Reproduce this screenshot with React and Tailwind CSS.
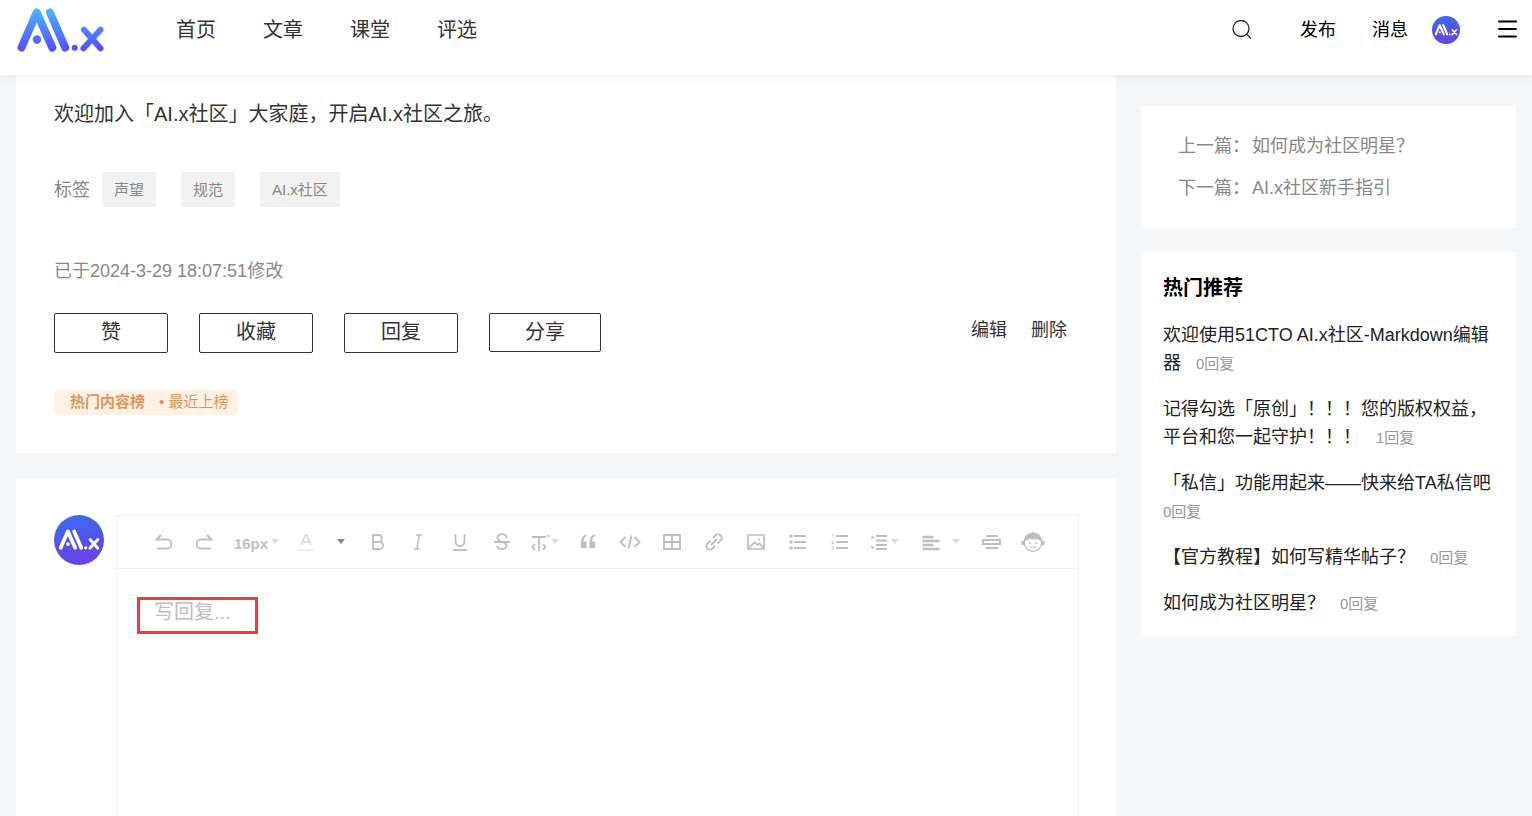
import { useState } from 'react';

const navItems = ['首页', '文章', '课堂', '评选'];
const tags = ['声望', '规范', 'AI.x社区'];

const actions = [
  { label: '赞', size: 'h-10 w-[114px]' },
  { label: '收藏', size: 'h-10 w-[114px]' },
  { label: '回复', size: 'h-10 w-[114px]' },
  { label: '分享', size: 'h-[39px] w-28' }
];

const hotPosts = [
  { title: '欢迎使用51CTO AI.x社区-Markdown编辑器', replies: 0 },
  { title: '记得勾选「原创」！！！您的版权权益，平台和您一起守护！！！', replies: 1 },
  { title: '「私信」功能用起来——快来给TA私信吧', replies: 0 },
  { title: '【官方教程】如何写精华帖子？', replies: 0 },
  { title: '如何成为社区明星？', replies: 0 }
];

const LogoShape = () => (
  <>
    <path d="M21.5 47.5 36.7 12.5 52.3 47.5" strokeWidth="8" />
    <path d="M50 12.5 65.2 47.5" strokeWidth="8" />
    <path d="M84 29.8 100.5 48.3M100.5 29.8 83.5 48.3" strokeWidth="6" />
  </>
);

const Logo = () => (
  <svg width="88" height="45" viewBox="17 8 88 45" fill="none">
    <defs>
      <linearGradient id="logoFill" gradientUnits="userSpaceOnUse" x1="0" y1="8" x2="0" y2="52">
        <stop offset="0" stopColor="#4db8ff" />
        <stop offset="1" stopColor="#544bff" />
      </linearGradient>
    </defs>
    <g stroke="url(#logoFill)" fill="none" strokeLinecap="round" strokeLinejoin="round">
      <LogoShape />
    </g>
    <circle cx="37" cy="39.5" r="4.2" fill="url(#logoFill)" />
    <circle cx="74.7" cy="47.8" r="3" fill="url(#logoFill)" />
  </svg>
);

const Avatar = ({ size, id }) => (
  <svg width={size} height={size} viewBox="0 0 50 50" className="shrink-0">
    <defs>
      <linearGradient id={id} x1="0" y1="0" x2="0.25" y2="1">
        <stop offset="0" stopColor="#3470f0" />
        <stop offset="1" stopColor="#6a42e6" />
      </linearGradient>
    </defs>
    <circle cx="25" cy="25" r="25" fill={`url(#${id})`} />
    <g transform="translate(-3.4 10.5) scale(0.47)">
      <g stroke="#fff" fill="none" strokeLinecap="round" strokeLinejoin="round">
        <LogoShape />
      </g>
      <circle cx="37" cy="39.5" r="4" fill="#fff" />
      <circle cx="74.7" cy="47.5" r="3.5" fill="#fff" />
    </g>
  </svg>
);

const Caret = ({ dark }) => (
  <svg width="10" height="20" viewBox="0 0 10 20">
    <path d="M1 7h8L5 12z" fill={dark ? '#888' : '#dcdcdc'} />
  </svg>
);

const Icon = ({ children, width = 1.8 }) => (
  <svg width="20" height="20" viewBox="0 0 20 20" fill="none" stroke="#bfbfbf" strokeWidth={width}>
    {children}
  </svg>
);

const tools = [
  { label: '撤销', box: 'w-10', icon: <Icon><path d="M7 3 2.5 7.5H13a4.5 4.5 0 0 1 0 9H3" /></Icon> },
  { label: '重做', box: 'w-10', icon: <Icon><path d="M13 3l4.500 4.500H7a4.500 4.500 0 0 0 0 9h10" /></Icon> },
  { label: '字号', box: 'w-[66px] gap-0.5', icon: <span className="pt-1 text-[15px] font-bold text-[#bfbfbf]">16px</span>, caret: 'light' },
  {
    label: '文字颜色',
    box: 'w-8',
    icon: (
      <Icon width={1.6}>
        <path d="M5 13 9.500 3h1L15 13M6.500 10h7" stroke="#d6d6d6" />
        <path d="M2 18h16" stroke="#ececec" strokeWidth="2" />
      </Icon>
    )
  },
  { label: '选择颜色', box: 'w-[37px]', caret: 'dark' },
  { label: '加粗', box: 'w-[38px]', icon: <Icon><path d="M5 3v14h6.500a3.600 3.600 0 0 0 0-7.200H5h5.500a3.400 3.400 0 0 0 0-6.800z" /></Icon> },
  { label: '斜体', box: 'w-[42px]', icon: <Icon width={1.6}><path d="M8 3h6M6 17h6M11.300 3 8.800 17" /></Icon> },
  { label: '下划线', box: 'w-[42px]', icon: <Icon><path d="M5.500 2v7.500a4.500 4.500 0 0 0 9 0V2M3 18h14" /></Icon> },
  { label: '删除线', box: 'w-[42px]', icon: <Icon><path d="M14.500 6c0-5-9-5-9-.5 0 2.500 2 3.700 4.500 4.500s4.500 2 4.500 4c0 4-9 4-9.500-.2M2 10h16" /></Icon> },
  {
    label: '标题',
    box: 'w-11',
    caret: 'light',
    icon: (
      <Icon width={1.8}>
        <path d="M2 5h14M9 5v14M5 12l-2.500 3L5 18M13 12l2.500 3-2.500 3" />
        <path d="M17.500 4h2" />
      </Icon>
    )
  },
  {
    label: '引用',
    box: 'w-[42px]',
    icon: (
      <Icon width={0}>
        <path d="M8.500 2.500v1.500c-2 1-2.800 3-2.800 5.500h2.800V16H3v-5.500C3 6 5 3 8.500 2.500zM17 2.500v1.500c-2 1-2.800 3-2.800 5.500H17V16h-5.500v-5.500C11.500 6 13.500 3 17 2.500z" fill="#bfbfbf" />
      </Icon>
    )
  },
  {
    label: '代码',
    box: 'w-[42px]',
    icon: (
      <svg width="22" height="20" viewBox="0 0 22 20" fill="none" stroke="#bfbfbf" strokeWidth="1.8">
        <path d="M6.500 5 1.500 10l5 5M15.500 5l5 5-5 5M12.500 3.500l-3 13" />
      </svg>
    )
  },
  { label: '表格', box: 'w-[42px]', icon: <Icon><path d="M2 3h16v14H2zM2 10h16M10 3v14" /></Icon> },
  {
    label: '链接',
    box: 'w-[42px]',
    icon: (
      <Icon>
        <path d="M9 6l2.600-2.600a3.500 3.500 0 0 1 5 5L13.500 11.500M6.500 8.500 3.400 11.600a3.500 3.500 0 0 0 5 5L11 14M7 13l6-6" />
      </Icon>
    )
  },
  {
    label: '图片',
    box: 'w-[42px]',
    icon: (
      <Icon width={1.7}>
        <path d="M2 3h16v14H2zM3 16l5.500-5.500 3 2.500 2-1.500L17 16" />
        <circle cx="13" cy="7.500" r="1" fill="#bfbfbf" stroke="none" />
      </Icon>
    )
  },
  {
    label: '无序列表',
    box: 'w-[42px]',
    icon: <Icon width={2}><path d="M6 4h12M6 10h12M6 16h12" /><path d="M1.500 4h3M1.500 10h3M1.500 16h3" strokeWidth="3" /></Icon>
  },
  {
    label: '有序列表',
    box: 'w-[42px]',
    icon: (
      <Icon>
        <path d="M6 4h12M6 10h12M6 16h12" />
        <path d="M2 3l1-.5V5.500M1.500 8.700h2v1.300l-2 1.500h2.200M1.500 14.200h2L2.500 15.800h1v1.700h-2" strokeWidth="0.700" />
      </Icon>
    )
  },
  {
    label: '行高',
    box: 'w-12',
    caret: 'light',
    icon: (
      <Icon>
        <path d="M6 4h11M6 8.500h11M6 13h11M6 17h11" />
        <path d="M.5 6.500h4L2.500 3.500zM.5 14.500h4l-2 3z" fill="#bfbfbf" stroke="none" />
      </Icon>
    )
  },
  {
    label: '对齐',
    box: 'w-16 gap-2.5',
    caret: 'light',
    icon: <Icon width={2.600}><path d="M1.500 5h11M1.500 9h17M1.500 13h11M1.500 17h17" /></Icon>
  },
  { label: '分割线', box: 'w-9', icon: <Icon><path d="M5 4h12M5 16h12" /><path d="M2 8h17v4H2z" /></Icon> },
  {
    label: '表情',
    box: 'w-12',
    icon: (
      <svg width="24" height="22" viewBox="0 0 24 22" fill="#bfbfbf">
        <circle cx="2.500" cy="12" r="2.300" />
        <circle cx="21.500" cy="12" r="2.300" />
        <circle cx="12" cy="11.500" r="8.800" fill="#fff" stroke="#bfbfbf" strokeWidth="1.300" />
        <path d="M3 10C3.500 4.500 7.500 2 11 1.800L12 0l1.200 1.800C17 2 20.500 5 21 10c-2.300-.2-4.500-1.300-5.500-2.200-2 .8-5 .8-7 0C7 9 5.300 9.800 3 10z" />
        <circle cx="8.500" cy="12" r="1" />
        <circle cx="15.500" cy="12" r="1" />
        <path d="M9 15.500q3 2.500 6 0" fill="none" stroke="#bfbfbf" />
      </svg>
    )
  }
];

const Header = () => (
  <header className="relative z-10 flex h-[75px] items-center bg-white pb-[15px] pl-[17px] pr-[15px] shadow-[0_2px_10px_rgba(0,0,0,0.06)]">
    <a href="#home" aria-label="AI.x">
      <Logo />
    </a>
    <nav className="ml-[71px] flex gap-[47px] text-xl text-[#333]">
      {navItems.map((item) => (
        <a key={item} href={`#${item}`}>{item}</a>
      ))}
    </nav>
    <div className="ml-auto flex items-center text-lg text-black">
      <button type="button" aria-label="搜索">
        <svg width="20" height="20" viewBox="0 0 20 20" fill="none" stroke="#222" strokeWidth="1.3">
          <circle cx="9" cy="8.500" r="8" />
          <path d="M14.600 14.100 19 18.500" />
        </svg>
      </button>
      <a href="#publish" className="ml-12">发布</a>
      <a href="#message" className="ml-9">消息</a>
      <a href="#me" aria-label="个人中心" className="ml-6">
        <Avatar size={28} id="avatarSmall" />
      </a>
      <button type="button" aria-label="菜单" className="ml-[37px]">
        <svg width="20" height="20" viewBox="0 0 20 20" stroke="#000" strokeWidth="2" strokeLinecap="round">
          <path d="M2 1.500h17M2 9h17M2 16.500h17" />
        </svg>
      </button>
    </div>
  </header>
);

const Article = () => (
  <article className="bg-white px-[38px] pb-[38px] pt-6">
    <p className="text-xl leading-[30px] text-[#333]">
      欢迎加入「AI.x社区」大家庭，开启AI.x社区之旅。
    </p>

    {/* Tags */}
    <div className="mt-[43px] flex items-center text-[#888]">
      <span className="mr-3 text-lg">标签</span>
      <div className="flex gap-[25px]">
        {tags.map((tag) => (
          <a key={tag} href={`#${tag}`} className="rounded-xs bg-[#f2f2f2] px-3 text-[15px] leading-[35px]">
            {tag}
          </a>
        ))}
      </div>
    </div>

    <p className="mt-[52px] text-lg leading-6 text-[#888]">已于2024-3-29 18:07:51修改</p>

    {/* Actions */}
    <div className="mt-[30px] flex items-center text-[#333]">
      <div className="flex gap-[31px] text-xl">
        {actions.map((action) => (
          <button key={action.label} type="button" className={`rounded-xs border border-[#333] pb-0.5 ${action.size}`}>
            {action.label}
          </button>
        ))}
      </div>
      <div className="ml-auto mr-[11px] flex gap-6 pb-1.5 text-lg">
        <button type="button">编辑</button>
        <button type="button">删除</button>
      </div>
    </div>

    <div className="mt-[37px] flex">
      <a href="#rank" className="rounded bg-[#fff2e5] pb-px pl-4 pr-2.5 text-[15px] leading-6 text-[#de965b]">
        <b className="mr-3.5">热门内容榜</b>• 最近上榜
      </a>
    </div>
  </article>
);

const ReplyEditor = () => {
  const [reply, setReply] = useState('');

  return (
    <section className="flex flex-1 gap-3 bg-white pl-[38px] pr-[37px] pt-[37px]">
      <Avatar size={50} id="avatarLarge" />
      <div className="flex min-w-0 flex-1 flex-col border border-b-0 border-[#f0f0f0]">
        <div className="flex h-[53px] items-center border-b border-[#f0f0f0] pl-[27px]">
          {tools.map((tool) => (
            <button
              key={tool.label}
              type="button"
              aria-label={tool.label}
              className={`flex h-10 items-center justify-center ${tool.box}`}
            >
              {tool.icon}
              {tool.caret && <Caret dark={tool.caret === 'dark'} />}
            </button>
          ))}
        </div>
        <div className="relative flex flex-1">
          <textarea
            aria-label="写回复"
            placeholder="写回复..."
            value={reply}
            onChange={(e) => setReply(e.target.value)}
            className="flex-1 resize-none px-[37px] pt-7 text-xl leading-[30px] outline-none placeholder:text-[#bfbfbf]"
          />
          <div className="pointer-events-none absolute left-5 top-7 h-[37px] w-[121px] border-3 border-[#f93838]"></div>
        </div>
      </div>
    </section>
  );
};

const Sidebar = () => (
  <aside className="w-[375px] shrink-0 pt-[31px]">
    <div className="bg-white pb-[19px] pl-[37px] pt-[19px] text-lg leading-[42px] text-[#888]">
      <p>上一篇：<a href="#prev" className="ml-0.5">如何成为社区明星？</a></p>
      <p>下一篇：<a href="#next" className="ml-0.5">AI.x社区新手指引</a></p>
    </div>

    <div className="mt-6 bg-white px-[22px] pb-[19px] pt-[21px]">
      <h2 className="text-xl font-bold leading-[30px] text-black">热门推荐</h2>
      <ul className="mt-[18px] space-y-[18px]">
        {hotPosts.map((post) => (
          <li key={post.title} className="whitespace-pre-wrap text-lg leading-7 text-[#222]">
            <a href="#post">{post.title}</a>
            {'   '}
            <span className="inline-block text-[15px] leading-6 text-[#999]">{post.replies}回复</span>
          </li>
        ))}
      </ul>
    </div>
  </aside>
);

const App = () => (
  <div
    lang="zh-CN"
    className="flex min-h-screen flex-col bg-[#f5f6f8] font-['Liberation_Sans','Noto_Sans_CJK_SC',sans-serif]"
  >
    <Header />
    <div className="flex flex-1 gap-[25px] px-4">
      <main className="flex min-w-0 flex-1 flex-col gap-[25px]">
        <Article />
        <ReplyEditor />
      </main>
      <Sidebar />
    </div>
  </div>
);

export default App;
